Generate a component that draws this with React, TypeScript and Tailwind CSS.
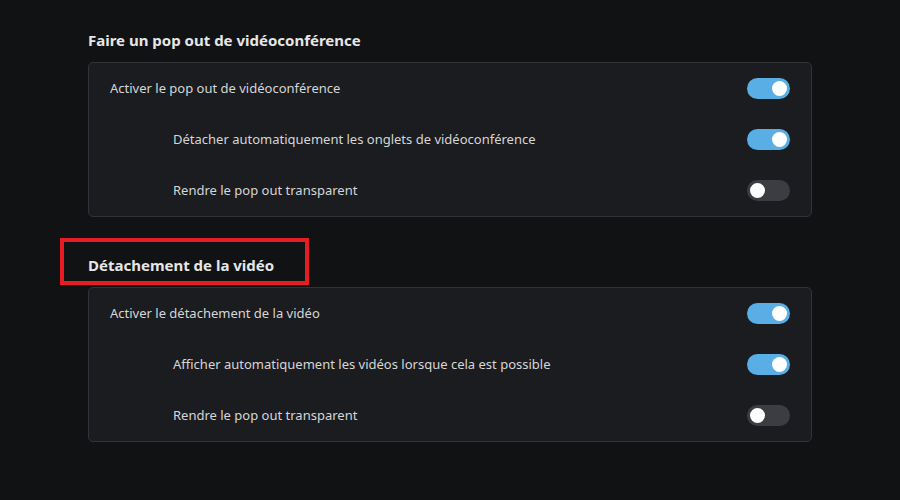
import React, { useState } from 'react';

interface Row {
  label: string;
  indent?: boolean;
  on: boolean;
}

interface Section {
  title: string;
  highlight?: boolean;
  rows: Row[];
}

const sections: Section[] = [
  {
    title: 'Faire un pop out de vidéoconférence',
    rows: [
      { label: 'Activer le pop out de vidéoconférence', on: true },
      { label: 'Détacher automatiquement les onglets de vidéoconférence', indent: true, on: true },
      { label: 'Rendre le pop out transparent', indent: true, on: false },
    ],
  },
  {
    title: 'Détachement de la vidéo',
    highlight: true,
    rows: [
      { label: 'Activer le détachement de la vidéo', on: true },
      { label: 'Afficher automatiquement les vidéos lorsque cela est possible', indent: true, on: true },
      { label: 'Rendre le pop out transparent', indent: true, on: false },
    ],
  },
];

const Toggle: React.FC<{ on: boolean; onClick: () => void }> = ({ on, onClick }) => (
  <button
    onClick={onClick}
    className={`relative w-[43px] h-[21px] rounded-full flex items-center px-[3px] ${
      on ? 'bg-[#5aaee6] justify-end' : 'bg-[#3b3d42] justify-start'
    }`}
  >
    <span className="block w-[15px] h-[15px] rounded-full bg-white" />
  </button>
);

const SettingsCard: React.FC<{ section: Section }> = ({ section }) => {
  const [values, setValues] = useState(section.rows.map(r => r.on));

  return (
    <div className="mb-[37px]">
      <div className="relative h-[22px] mb-[11px]">
        <h2 className="text-[15px] leading-[22px] font-bold text-[#e6e6e6]">{section.title}</h2>
        {section.highlight && (
          <div className="absolute -left-[28px] -top-[16px] w-[249px] h-[47px] border-4 border-[#e81c24] pointer-events-none" />
        )}
      </div>
      <div className="bg-[#1a1c20] border border-[#303338] rounded-[5px]">
        {section.rows.map((row, i) => (
          <div key={row.label} className="h-[51px] flex items-center justify-between pl-[21px] pr-[21px]">
            <span className={`text-[13px] text-[#d6d6d6] ${row.indent ? 'pl-[63px]' : ''}`}>{row.label}</span>
            <Toggle
              on={values[i]}
              onClick={() => setValues(v => v.map((x, j) => (j === i ? !x : x)))}
            />
          </div>
        ))}
      </div>
    </div>
  );
};

export default function App() {
  return (
    <div
      className="w-[900px] h-[500px] bg-[#111214] overflow-hidden pt-[29px] pl-[88px]"
      style={{ fontFamily: '"Noto Sans", "Open Sans", sans-serif' }}
    >
      <div className="w-[724px]">
        {sections.map(s => (
          <SettingsCard key={s.title} section={s} />
        ))}
      </div>
    </div>
  );
}
